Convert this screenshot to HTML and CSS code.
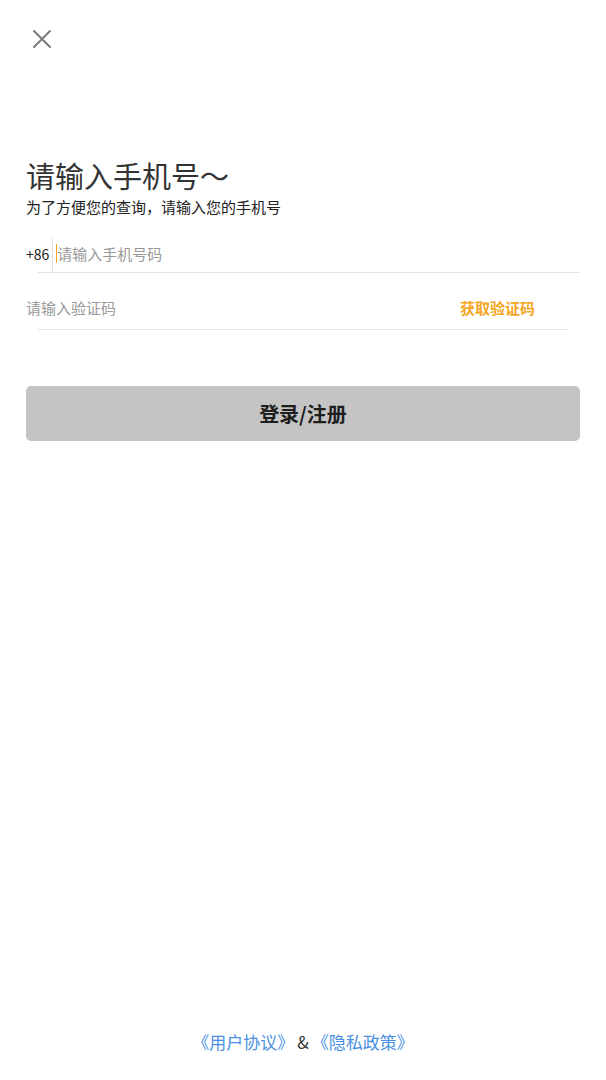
FILE: index.html
```html
<!DOCTYPE html>
<html lang="zh-CN">
<head>
    <meta charset="UTF-8">
    <meta name="viewport" content="width=device-width, initial-scale=1.0">
    <title>登录</title>
    <link rel="stylesheet" href="styles.css">
</head>
<body>
    <div class="page">
        <div class="close-btn">
            <svg width="20" height="20" viewBox="0 0 20 20">
                <path d="M2 2 L18 18 M18 2 L2 18" stroke="#7a7a7a" stroke-width="2" stroke-linecap="round" fill="none"/>
            </svg>
        </div>

        <div class="heading">
            <h1>请输入手机号～</h1>
            <p>为了方便您的查询，请输入您的手机号</p>
        </div>

        <div class="field phone-field">
            <div class="field-row">
                <span class="prefix">+86</span>
                <span class="divider"></span>
                <span class="cursor"></span>
                <span class="placeholder">请输入手机号码</span>
            </div>
            <div class="field-line"></div>
        </div>

        <div class="field code-field">
            <div class="field-row">
                <span class="placeholder">请输入验证码</span>
                <span class="get-code">获取验证码</span>
            </div>
            <div class="field-line short"></div>
        </div>

        <button class="submit-btn">登录/注册</button>

        <div class="footer">
            <span class="link">《用户协议》</span><span class="amp">&amp;</span><span class="link">《隐私政策》</span>
        </div>
    </div>
</body>
</html>
```

FILE: styles.css
```css
body {
    margin: 0;
    font-family: "Noto Sans CJK SC", "Noto Sans", sans-serif;
    background-color: #fff;
    color: #333;
}

.page {
    min-height: 100vh;
    box-sizing: border-box;
    padding: 0 26px 26px;
    display: flex;
    flex-direction: column;
}

.close-btn {
    width: 20px;
    height: 20px;
    margin: 29px 0 0 6px;
}

.heading {
    margin-top: 109px;
}

.heading h1 {
    margin: 0;
    font-size: 29px;
    font-weight: 400;
    line-height: 34px;
    color: #333;
}

.heading p {
    margin: 5px 0 0;
    font-size: 15px;
    line-height: 20px;
    color: #222;
}

.field-row {
    height: 34px;
    display: flex;
    align-items: center;
    font-size: 15px;
}

.phone-field {
    margin-top: 21px;
}

.phone-field .prefix,
.phone-field .placeholder {
    margin-bottom: 3px;
}

.prefix {
    color: #222;
    font-size: 14px;
}

.divider {
    width: 1px;
    height: 34px;
    background-color: #e2e2e2;
    margin-left: 3px;
}

.cursor {
    width: 1px;
    height: 19px;
    background-color: #f5a623;
    margin: 0 0 3px 3px;
}

.placeholder {
    color: #999;
}

.field-line {
    height: 1px;
    background-color: #e2e2e2;
    margin-left: 12px;
}

.field-line.short {
    margin-right: 12px;
}

.code-field {
    margin-top: 18px;
}

.code-field .field-row {
    height: 38px;
    box-sizing: border-box;
    padding-bottom: 6px;
    justify-content: space-between;
}

.get-code {
    color: #f5a623;
    font-size: 15px;
    font-weight: 700;
    margin-right: 45px;
}

.submit-btn {
    margin-top: 56px;
    height: 55px;
    border: none;
    border-radius: 5px;
    background-color: #c4c4c4;
    color: #1e1e1e;
    font-family: inherit;
    font-size: 20px;
    font-weight: 700;
    cursor: pointer;
}

.footer {
    margin-top: auto;
    text-align: center;
    font-size: 17px;
    line-height: 24px;
    color: #333;
}

.amp {
    margin: 0 3px;
}

.link {
    color: #4a90e2;
}
```
